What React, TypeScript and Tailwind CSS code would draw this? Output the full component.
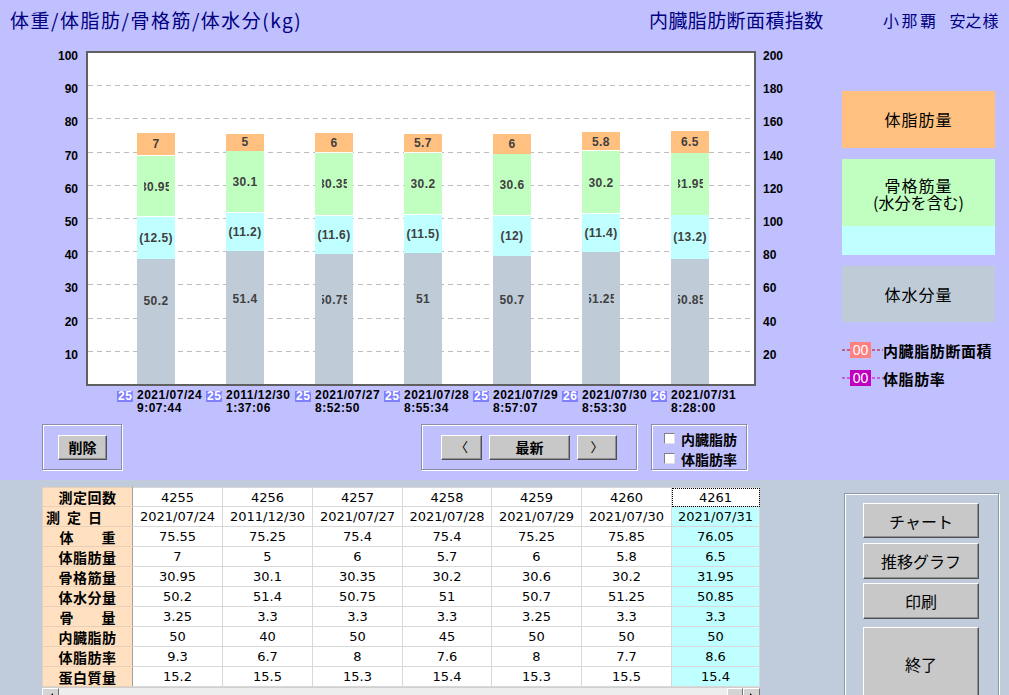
import React from "react";

const K = 3.32;
const INNER_H = 331;

type Bar = {
  fat: number;
  muscle: number;
  water: number;
  ov: number;
  id: string;
  date: string;
  time: string;
  sepC: boolean;
  sepO: boolean;
};

const bars: Bar[] = [
  { fat: 7, muscle: 30.95, water: 50.2, ov: 12.5, id: "255", date: "2021/07/24", time: "9:07:44", sepC: true, sepO: true },
  { fat: 5, muscle: 30.1, water: 51.4, ov: 11.2, id: "256", date: "2011/12/30", time: "1:37:06", sepC: true, sepO: false },
  { fat: 6, muscle: 30.35, water: 50.75, ov: 11.6, id: "257", date: "2021/07/27", time: "8:52:50", sepC: true, sepO: true },
  { fat: 5.7, muscle: 30.2, water: 51, ov: 11.5, id: "258", date: "2021/07/28", time: "8:55:34", sepC: true, sepO: true },
  { fat: 6, muscle: 30.6, water: 50.7, ov: 12, id: "259", date: "2021/07/29", time: "8:57:07", sepC: true, sepO: false },
  { fat: 5.8, muscle: 30.2, water: 51.25, ov: 11.4, id: "260", date: "2021/07/30", time: "8:53:30", sepC: true, sepO: true },
  { fat: 6.5, muscle: 31.95, water: 50.85, ov: 13.2, id: "261", date: "2021/07/31", time: "8:28:00", sepC: false, sepO: false },
];

const tableRows: { label: React.ReactNode; values: string[] }[] = [
  { label: "測定回数", values: ["4255", "4256", "4257", "4258", "4259", "4260", "4261"] },
  {
    label: "日",
    values: ["2021/07/24", "2011/12/30", "2021/07/27", "2021/07/28", "2021/07/29", "2021/07/30", "2021/07/31"],
  },
  { label: "体重", values: ["75.55", "75.25", "75.4", "75.4", "75.25", "75.85", "76.05"] },
  { label: "体脂肪量", values: ["7", "5", "6", "5.7", "6", "5.8", "6.5"] },
  { label: "骨格筋量", values: ["30.95", "30.1", "30.35", "30.2", "30.6", "30.2", "31.95"] },
  { label: "体水分量", values: ["50.2", "51.4", "50.75", "51", "50.7", "51.25", "50.85"] },
  { label: "骨量", values: ["3.25", "3.3", "3.3", "3.3", "3.25", "3.3", "3.3"] },
  { label: "内臓脂肪", values: ["50", "40", "50", "45", "50", "50", "50"] },
  { label: "体脂肪率", values: ["9.3", "6.7", "8", "7.6", "8", "7.7", "8.6"] },
  { label: "蛋白質量", values: ["15.2", "15.5", "15.3", "15.4", "15.3", "15.5", "15.4"] },
];

const colW = [90, 90, 90, 89, 90, 90, 88];

function Btn({ children, className = "" }: { children: React.ReactNode; className?: string }) {
  return (
    <div
      className={
        "bg-[#C8C8C8] border border-t-white border-l-white border-r-[#505050] border-b-[#505050] shadow-[inset_-1px_-1px_0_#909090] flex items-center justify-center text-black " +
        className
      }
    >
      {children}
    </div>
  );
}

function HeaderLabel({ row }: { row: number }) {
  if (row === 1) {
    return (
      <div className="flex gap-[7px] pl-[3px]">
        <span>測</span>
        <span>定</span>
        <span>日</span>
      </div>
    );
  }
  if (row === 2) {
    return (
      <div className="flex justify-between w-[56px] mx-auto">
        <span>体</span>
        <span>重</span>
      </div>
    );
  }
  if (row === 6) {
    return (
      <div className="flex justify-between w-[56px] mx-auto">
        <span>骨</span>
        <span>量</span>
      </div>
    );
  }
  return <div className="text-center tracking-[0.5px]">{tableRows[row].label}</div>;
}

function SegLabel({ text, left, centerY, w }: { text: string; left: number; centerY: number; w: number }) {
  return (
    <div
      className="absolute h-[14px] overflow-hidden flex justify-center items-center whitespace-nowrap text-[12px] leading-[14px] font-bold tracking-[0.4px] text-[#404040] font-['Liberation_Sans',sans-serif]"
      style={{ left: left + (38 - w) / 2, top: INNER_H - centerY - 7, width: w }}
    >
      <span className="shrink-0">{text}</span>
    </div>
  );
}

export default function App() {
  const axisVals = [100, 90, 80, 70, 60, 50, 40, 30, 20, 10];
  return (
    <div className="w-[1009px] h-[695px] overflow-hidden relative font-['Noto_Sans_CJK_JP',sans-serif] select-none">
      {/* TOP SECTION */}
      <div className="h-[480px] bg-[#C0C0FF] flex flex-col">
        {/* Header */}
        <div className="h-[40px] flex items-center text-[#000080] pb-[1px]">
          <div className="ml-[10px] w-[639px] text-[19px] tracking-[1.5px] leading-none">体重/体脂肪/骨格筋/体水分(kg)</div>
          <div className="w-[234px] text-[19px] tracking-[0.4px] leading-none">内臓脂肪断面積指数</div>
          <div className="flex items-center text-[16px] leading-none whitespace-nowrap">
            <span className="tracking-[2.5px]">小那覇</span>
            <span className="ml-[11px]">安之</span>
            <span className="ml-[1px]">様</span>
          </div>
        </div>

        {/* Chart row */}
        <div className="flex h-[346px]">
          {/* left axis */}
          <div className="w-[86px] relative">
            {axisVals.map((v) => (
              <div
                key={v}
                className="absolute right-[8px] h-[14px] leading-[14px] text-[12px] font-bold text-black font-['Liberation_Sans',sans-serif]"
                style={{ top: 348 - v * K - 7 }}
              >
                {v}
              </div>
            ))}
          </div>

          {/* plot */}
          <div className="mt-[11px] w-[670px] h-[335px] border-2 border-[#606060] bg-white relative">
            <svg className="absolute left-0 top-0" width={666} height={331}>
              {[10, 20, 30, 40, 50, 60, 70, 80, 90].map((v) => (
                <line
                  key={v}
                  x1={0}
                  x2={666}
                  y1={Math.round(INNER_H - v * K) + 0.5}
                  y2={Math.round(INNER_H - v * K) + 0.5}
                  stroke="#BDBDBD"
                  strokeWidth={1}
                  strokeDasharray="5 4"
                />
              ))}
            </svg>
            {bars.map((b, i) => {
              const left = 49 + 89 * i;
              const g = (b.water - b.ov) * K;
              const c = b.ov * K;
              const gr = (b.muscle - b.ov) * K;
              const o = b.fat * K;
              return (
                <React.Fragment key={i}>
                  <div className="absolute w-[38px] bg-[#BFCCD8]" style={{ left, bottom: 0, height: g }} />
                  <div className="absolute w-[38px] bg-[#C0FFFF]" style={{ left, bottom: g, height: c }} />
                  <div
                    className={"absolute w-[38px] bg-[#C0FFC0] " + (b.sepC ? "border-b border-white" : "")}
                    style={{ left, bottom: g + c, height: gr }}
                  />
                  <div
                    className={"absolute w-[38px] bg-[#FFC080] " + (b.sepO ? "border-b border-white" : "")}
                    style={{ left, bottom: g + c + gr, height: o }}
                  />
                  <SegLabel text={String(b.fat)} left={left} centerY={g + c + gr + o / 2} w={25} />
                  <SegLabel text={String(b.muscle)} left={left} centerY={g + c + gr / 2} w={25} />
                  <SegLabel text={`(${b.ov})`} left={left} centerY={g + c / 2} w={37} />
                  <SegLabel text={String(b.water)} left={left} centerY={(b.water * K) / 2} w={25} />
                </React.Fragment>
              );
            })}
          </div>

          {/* right axis */}
          <div className="w-[86px] relative">
            {axisVals.map((v) => (
              <div
                key={v}
                className="absolute left-[7px] h-[14px] leading-[14px] text-[12px] font-bold text-black font-['Liberation_Sans',sans-serif]"
                style={{ top: 348 - v * K - 7 }}
              >
                {v * 2}
              </div>
            ))}
          </div>

          {/* legend */}
          <div className="w-[153px] pt-[51px] flex flex-col text-black">
            <div className="h-[57px] bg-[#FFC080] flex items-center justify-center text-[16px] tracking-[1px]">体脂肪量</div>
            <div className="mt-[11px] h-[68px] bg-[#C0FFC0] flex flex-col items-center justify-center text-[16px] leading-[17px] pt-[2px]">
              <span className="tracking-[1px] leading-[17px]">骨格筋量</span>
              <span className="leading-[17px]">(水分を含む)</span>
            </div>
            <div className="h-[29px] bg-[#C0FFFF]" />
            <div className="mt-[11px] h-[56px] bg-[#BFCCD8] flex items-center justify-center text-[16px] tracking-[1px]">体水分量</div>
            <div className="mt-[20px] h-[16px] flex items-center">
              <svg width={8} height={2} className="shrink-0">
                <line x1={0} y1={1} x2={8} y2={1} stroke="#C00000" strokeDasharray="3 2" />
              </svg>
              <div className="w-[21px] h-[16px] bg-[#FF8080] text-white text-[14px] leading-[16px] text-center font-['Liberation_Sans',sans-serif] shrink-0">
                00
              </div>
              <svg width={12} height={2} className="shrink-0">
                <line x1={1} y1={1} x2={12} y2={1} stroke="#C00000" strokeDasharray="3 2" />
              </svg>
              <span className="text-[15px] font-bold tracking-[0.6px] whitespace-nowrap leading-none">内臓脂肪断面積</span>
            </div>
            <div className="mt-[12px] h-[16px] flex items-center">
              <svg width={8} height={2} className="shrink-0">
                <line x1={0} y1={1} x2={8} y2={1} stroke="#C000C0" strokeDasharray="3 2" />
              </svg>
              <div className="w-[21px] h-[16px] bg-[#C000C0] text-white text-[14px] leading-[16px] text-center font-['Liberation_Sans',sans-serif] shrink-0">
                00
              </div>
              <svg width={12} height={2} className="shrink-0">
                <line x1={1} y1={1} x2={12} y2={1} stroke="#C000C0" strokeDasharray="3 2" />
              </svg>
              <span className="text-[15px] font-bold tracking-[0.6px] whitespace-nowrap leading-none">体脂肪率</span>
            </div>
          </div>
        </div>

        {/* x labels */}
        <div className="h-[34px] relative">
          {bars.map((b, i) => (
            <div
              key={"d" + i}
              className="absolute top-[3px] text-[12px] leading-[13px] font-bold tracking-[0.5px] text-black whitespace-nowrap font-['Liberation_Sans',sans-serif]"
              style={{ left: 137 + 89 * i }}
            >
              <div>{b.date}</div>
              <div>{b.time}</div>
            </div>
          ))}
          {bars.map((b, i) => (
            <div
              key={"b" + i}
              className="absolute top-[5px] w-[16px] h-[11px] bg-[#8080FF] overflow-hidden text-white text-[12px] leading-[11px] font-bold pl-[1px] tracking-[0.5px] whitespace-nowrap font-['Liberation_Sans',sans-serif]"
              style={{ left: 117 + 89 * i }}
            >
              {b.id}
            </div>
          ))}
        </div>

        {/* controls */}
        <div className="mt-[4px] h-[46px] flex">
          <div className="ml-[42px] w-[80px] h-[46px] border border-[#8C8CA8] shadow-[1px_1px_0_#ffffff,inset_1px_1px_0_#ffffff] flex items-center pl-[15px]">
            <Btn className="w-[49px] h-[25px] text-[14px] font-bold">削除</Btn>
          </div>
          <div className="ml-[299px] w-[216px] h-[46px] border border-[#8C8CA8] shadow-[1px_1px_0_#ffffff,inset_1px_1px_0_#ffffff] flex items-center pl-[19px] gap-[7px]">
            <Btn className="w-[41px] h-[25px] text-[13px]">〈</Btn>
            <Btn className="w-[81px] h-[25px] text-[14px] font-bold">最新</Btn>
            <Btn className="w-[40px] h-[25px] text-[13px]">〉</Btn>
          </div>
          <div className="ml-[14px] w-[96px] h-[46px] border border-[#8C8CA8] shadow-[1px_1px_0_#ffffff,inset_1px_1px_0_#ffffff] flex flex-col pl-[12px] pt-[6px] gap-[5px]">
            {["内臓脂肪", "体脂肪率"].map((t) => (
              <div key={t} className="h-[15px] flex items-center gap-[6px]">
                <div className="w-[11px] h-[11px] bg-white border border-t-[#808080] border-l-[#808080] border-r-[#e0e0e0] border-b-[#e0e0e0]" />
                <span className="text-[14px] font-bold leading-none text-black">{t}</span>
              </div>
            ))}
          </div>
        </div>
      </div>

      {/* BOTTOM SECTION */}
      <div className="h-[215px] bg-[#C0CCDC] flex">
        <div className="ml-[42px] mt-[7px] flex flex-col">
          <table className="border-collapse table-fixed bg-white">
            <tbody>
              {tableRows.map((r, ri) => (
                <tr key={ri} className={ri === 0 ? "h-[19px]" : "h-[20px]"}>
                  <td className="w-[90px] p-0 bg-[#FFE0C0] border border-[#E8D0B8] border-r-[#A0A0A0] text-[14px] font-bold text-black leading-none">
                    <HeaderLabel row={ri} />
                  </td>
                  {r.values.map((v, ci) => {
                    const last = ci === 6;
                    let cls = "p-0 text-center text-[13px] leading-none text-black font-['DejaVu_Sans',sans-serif] border border-[#D8D8D8]";
                    if (last && ri > 0) cls += " bg-[#C0FFFF]";
                    if (last && ri === 0) cls += " outline outline-1 outline-dotted outline-black -outline-offset-1";
                    return (
                      <td key={ci} className={cls} style={{ width: colW[ci] }}>
                        {v}
                      </td>
                    );
                  })}
                </tr>
              ))}
            </tbody>
          </table>
          {/* scrollbar */}
          <div className="h-[17px] flex bg-[#EDEDED] border-t border-[#D0D0D0]">
            <div className="w-[17px] h-[17px] bg-[#D4D4D4] border border-t-white border-l-white border-r-[#707070] border-b-[#707070] flex items-center justify-center">
              <div className="w-0 h-0 border-y-[4px] border-y-transparent border-r-[4px] border-r-black" />
            </div>
            <div className="flex-1" />
            <div className="w-[16px] h-[17px] bg-[#D4D4D4] border border-t-white border-l-white border-r-[#707070] border-b-[#707070]" />
            <div className="w-[17px] h-[17px] bg-[#D4D4D4] border border-t-white border-l-white border-r-[#707070] border-b-[#707070] flex items-center justify-center">
              <div className="w-0 h-0 border-y-[4px] border-y-transparent border-l-[4px] border-l-black" />
            </div>
          </div>
        </div>

        <div className="ml-[84px] mt-[13px] w-[155px] h-[230px] border border-[#8C98A8] shadow-[1px_1px_0_#ffffff,inset_1px_1px_0_#ffffff] flex flex-col pl-[18px] pt-[9px] shrink-0">
          <Btn className="w-[116px] h-[35px] text-[16px]">チャート</Btn>
          <Btn className="mt-[5px] w-[116px] h-[36px] text-[16px]">推移グラフ</Btn>
          <Btn className="mt-[4px] w-[116px] h-[36px] text-[16px]">印刷</Btn>
          <Btn className="mt-[8px] w-[116px] h-[74px] text-[16px]">終了</Btn>
        </div>
      </div>
    </div>
  );
}
